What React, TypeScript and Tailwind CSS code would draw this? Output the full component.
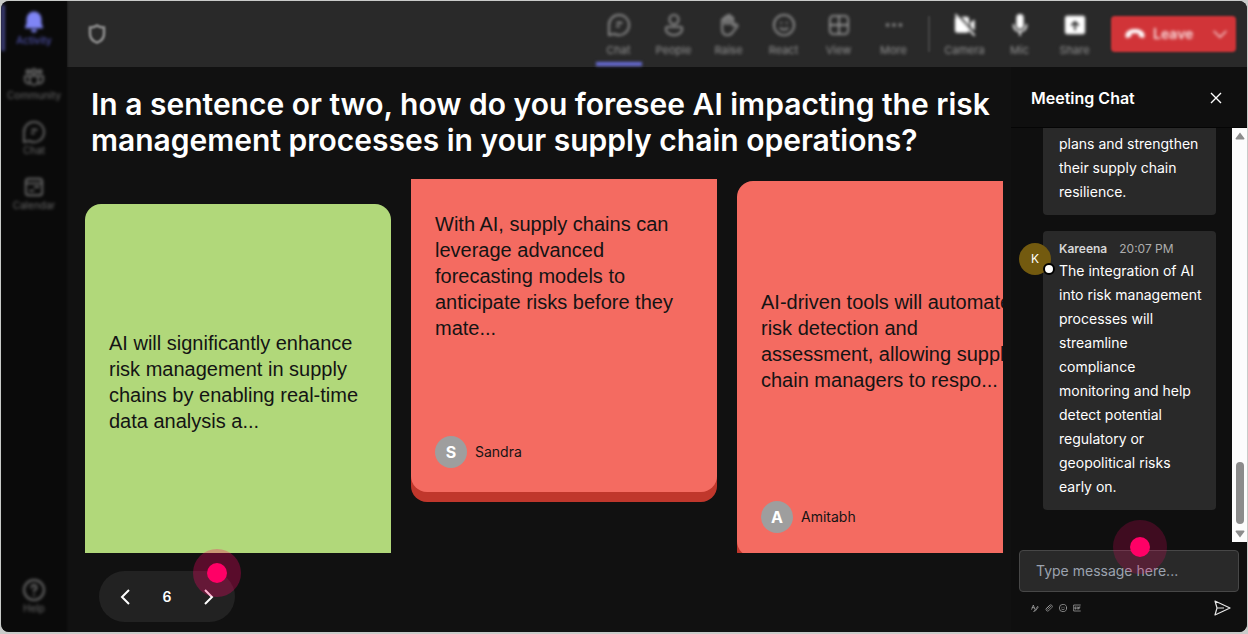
import React, { useState } from 'react';

interface IconProps {
  className?: string;
}

interface NavItem {
  label: string;
  icon: React.FC<IconProps>;
  active?: boolean;
}

interface Answer {
  text: string;
  author?: string;
  initial?: string;
  cardClass: string;
  bodyClass: string;
}

// Shared wrapper for the 24px outline icons
const Icon: React.FC<IconProps & { children: React.ReactNode }> = ({ className = 'size-6', children }) => (
  <svg
    viewBox="0 0 24 24"
    className={className}
    fill="none"
    stroke="currentColor"
    strokeWidth="2"
    strokeLinecap="round"
    strokeLinejoin="round"
    aria-hidden="true"
  >
    {children}
  </svg>
);

const BellIcon: React.FC<IconProps> = ({ className }) => (
  <Icon className={className}>
    <path
      d="M12 1.5A7.5 7.5 0 0 0 4.5 9v4.5L3 17.2c-.2.6.2 1.1.8 1.1h16.4c.6 0 1-.5.8-1.1l-1.5-3.7V9A7.5 7.5 0 0 0 12 1.5zM9 19.5a3 3 0 0 0 6 0z"
      fill="currentColor"
      stroke="none"
    />
  </Icon>
);

const CommunityIcon: React.FC<IconProps> = ({ className }) => (
  <Icon className={className}>
    <circle cx="12" cy="6" r="2.5" />
    <circle cx="5.5" cy="6" r="1.8" />
    <circle cx="18.5" cy="6" r="1.8" />
    <path d="M7.5 11h9v5a4.5 4.5 0 0 1-9 0zM7.5 11H2v4a4.5 4.5 0 0 0 5.5 4M16.5 11H22v4a4.5 4.5 0 0 1-5.5 4" />
  </Icon>
);

const ChatIcon: React.FC<IconProps> = ({ className }) => (
  <Icon className={className}>
    <path d="M12 1a11 11 0 1 1-5.200 20.700L1 23V12A11 11 0 0 1 12 1z" />
    <path d="M10 9.5h5M9.5 13.5H12" />
  </Icon>
);

const CalendarIcon: React.FC<IconProps> = ({ className }) => (
  <Icon className={className}>
    <rect x="3" y="3" width="18" height="18" rx="3" />
    <path d="M3 8h18M7.5 16h4M13 12h4" />
  </Icon>
);

const HelpIcon: React.FC<IconProps> = ({ className }) => (
  <Icon className={className}>
    <circle cx="12" cy="12" r="10" />
    <path d="M9.5 9.5a2.5 2.5 0 1 1 3.6 2.2c-.8.4-1.1.9-1.1 1.8M12 17v.2" />
  </Icon>
);

const PeopleIcon: React.FC<IconProps> = ({ className }) => (
  <Icon className={className}>
    <circle cx="12" cy="6" r="5" />
    <path d="M5 14h14c1.2 0 2 .8 2 1.8 0 4.2-3.8 7.200-9 7.200s-9-3-9-7.200c0-1 .8-1.800 2-1.800z" />
  </Icon>
);

const RaiseIcon: React.FC<IconProps> = ({ className }) => (
  <Icon className={className}>
    <path d="M4.5 12V6.500a1.500 1.500 0 0 1 3 0V4a1.500 1.500 0 0 1 3 0V2.500a1.500 1.500 0 0 1 3 0V5a1.500 1.500 0 0 1 3 0v8l2-1.500c1.500-1 3.500.5 2.500 2l-4 5C15 21.500 14 23 10.500 23c-4 0-6-2.500-6-6.500z" />
    <path d="M7.5 6.500V11M10.500 4v7M13.500 5v6" />
  </Icon>
);

const ReactIcon: React.FC<IconProps> = ({ className }) => (
  <Icon className={className}>
    <circle cx="12" cy="12" r="11" />
    <path d="M8 15.5c2 2 6 2 8 0M9 9.5v.4M15 9.5v.4" />
  </Icon>
);

const ViewIcon: React.FC<IconProps> = ({ className }) => (
  <Icon className={className}>
    <rect x="2" y="2" width="20" height="20" rx="4" />
    <path d="M12 2v20M2 12h20" />
  </Icon>
);

const MoreIcon: React.FC<IconProps> = ({ className }) => (
  <Icon className={className}>
    <g fill="currentColor" stroke="none">
      <circle cx="5" cy="12" r="2" />
      <circle cx="12" cy="12" r="2" />
      <circle cx="19" cy="12" r="2" />
    </g>
  </Icon>
);

const CameraOffIcon: React.FC<IconProps> = ({ className }) => (
  <Icon className={className}>
    <path
      d="M1 5.5A2.500 2.500 0 0 1 3 3l13 14v2.500c-.5.400-1 1-1.500 1h-11A2.500 2.500 0 0 1 1 18zM8 3h6a2.500 2.500 0 0 1 2.500 2.500V13zM18 9.500l3.500-3c.5-.400 1 0 1 .5v10c0 .6-.5.8-1 .5L18 14z"
      fill="currentColor"
      stroke="none"
    />
    <path d="M2 1l20 22" />
  </Icon>
);

const MicIcon: React.FC<IconProps> = ({ className }) => (
  <Icon className={className}>
    <rect x="8" y="0" width="8" height="16" rx="4" fill="currentColor" stroke="none" />
    <path d="M5 12a7 7 0 0 0 14 0M12 19v4" />
  </Icon>
);

const ShareIcon: React.FC<IconProps> = ({ className }) => (
  <Icon className={className}>
    <rect x="1" y="2" width="22" height="20" rx="2.5" fill="currentColor" stroke="none" />
    <path d="M12 17V8.5M8.5 12L12 8.5l3.5 3.5" stroke="#292929" />
  </Icon>
);

const navItems: NavItem[] = [
  { label: 'Activity', icon: BellIcon, active: true },
  { label: 'Community', icon: CommunityIcon },
  { label: 'Chat', icon: ChatIcon },
  { label: 'Calendar', icon: CalendarIcon },
];

const meetingActions: NavItem[] = [
  { label: 'Chat', icon: ChatIcon, active: true },
  { label: 'People', icon: PeopleIcon },
  { label: 'Raise', icon: RaiseIcon },
  { label: 'React', icon: ReactIcon },
  { label: 'View', icon: ViewIcon },
  { label: 'More', icon: MoreIcon },
];

const deviceActions: NavItem[] = [
  { label: 'Camera', icon: CameraOffIcon },
  { label: 'Mic', icon: MicIcon },
  { label: 'Share', icon: ShareIcon },
];

const answers: Answer[] = [
  {
    text: 'AI will significantly enhance risk management in supply chains by enabling real-time data analysis a...',
    cardClass: 'mt-[25px] h-[355px] rounded-t-2xl bg-[#b1d87a]',
    bodyClass: 'my-auto',
  },
  {
    text: 'With AI, supply chains can leverage advanced forecasting models to anticipate risks before they mate...',
    author: 'Sandra',
    initial: 'S',
    cardClass: 'h-[313px] rounded-b-2xl bg-[#f46b61] shadow-[0_10px_0_#c0372c]',
    bodyClass: 'mt-2 mb-auto',
  },
  {
    text: 'AI-driven tools will automate risk detection and assessment, allowing supply chain managers to respo...',
    author: 'Amitabh',
    initial: 'A',
    cardClass: 'mt-0.5 h-[376px] rounded-2xl bg-[#f46b61] shadow-[0_10px_0_#c0372c]',
    bodyClass: 'my-auto pb-6',
  },
];

const Sidebar: React.FC = () => (
  <nav className="flex w-[66px] shrink-0 flex-col bg-[#0a0a0a] pb-[18px] text-[10px] text-[#6b6b6b] blur-[1px]">
    {navItems.map(({ label, icon: ItemIcon, active }) => (
      <button
        key={label}
        type="button"
        className={`relative flex h-[55px] flex-col items-center pt-[9px] leading-3 blur-[1px] ${active ? 'text-[#5b5fc7]' : ''}`}
      >
        {active && <span className="absolute top-1 left-0 h-[46px] w-1 bg-[#3d3e78]" />}
        <ItemIcon className={active ? 'size-6 text-[#7f85f5]' : 'size-6 px-px'} />
        {label}
      </button>
    ))}
    <button type="button" className="mt-auto flex flex-col items-center leading-3 blur-[1px]">
      <HelpIcon className="size-6" />
      Help
    </button>
  </nav>
);

const ActionButton: React.FC<{ item: NavItem; bright?: boolean }> = ({ item, bright }) => {
  const ItemIcon = item.icon;
  return (
    <button
      type="button"
      className="relative flex w-[55px] flex-col items-center pt-1 text-[11px] leading-4 text-[#939393] blur-[1px]"
    >
      <ItemIcon className={bright ? 'mb-1.5 size-[22px] text-white' : 'mb-1.5 size-[22px]'} />
      {item.label}
      {item.active && <span className="absolute -bottom-2 h-1 w-[46px] bg-[#6a6edb]" />}
    </button>
  );
};

const TopBar: React.FC = () => (
  <header className="flex h-[66px] items-center bg-[#292929] pr-[11px] pl-5">
    <div className="flex flex-1 items-center">
      <svg
        viewBox="0 0 20 22"
        className="h-[22px] w-5 text-[#939393] blur-[1px]"
        fill="none"
        stroke="currentColor"
        strokeWidth="2.5"
        aria-hidden="true"
      >
        <path d="M10 2.5c2 1.5 4.5 2 7 2V11c0 4.5-3 7.2-7 8.7C6 18.2 3 15.5 3 11V4.5c2.5 0 5-.5 7-2z" />
      </svg>
      <div className="ml-auto flex items-center blur-[1px]">
        {meetingActions.map((item) => (
          <ActionButton key={item.label} item={item} />
        ))}
        <span className="mx-[7px] h-9 w-0.5 bg-[#454545]" />
        {deviceActions.map((item) => (
          <ActionButton key={item.label} item={item} bright />
        ))}
      </div>
      <div className="ml-[9px] flex h-9 w-[125px] rounded bg-[#d13438] text-[#f9dfe0] blur-[1px]">
        <button type="button" className="flex flex-1 items-center gap-2 pl-[14px] text-sm font-semibold blur-[1px]">
          <svg viewBox="0 0 20 12" className="h-3 w-5 text-white" fill="currentColor" aria-hidden="true">
            <path d="M10 1C5.5 1 1 3 .5 6.500c-.2 1.500.1 2.700.7 3.200.5.4 1 .3 1.600.1l2.500-.8c.7-.2 1-.7 1-1.400V5.800c2.300-.8 5.100-.8 7.400 0v1.800c0 .7.3 1.200 1 1.400l2.500.8c.6.2 1.100.3 1.600-.1.6-.5.9-1.700.7-3.200C19 3 14.500 1 10 1z" />
          </svg>
          Leave
        </button>
        <button type="button" aria-label="Leave options" className="flex w-8 items-center justify-center blur-[1px]">
          <Icon className="size-4">
            <path d="M3 8l9 9 9-9" />
          </Icon>
        </button>
      </div>
    </div>
  </header>
);

const AnswerCard: React.FC<{ answer: Answer }> = ({ answer }) => (
  <article className={`flex w-[306px] shrink-0 flex-col p-6 text-[#141414] ${answer.cardClass}`}>
    <p className={`font-['Liberation_Sans',Arial,sans-serif] text-xl leading-[26px] ${answer.bodyClass}`}>{answer.text}</p>
    {answer.author && (
      <footer className="flex items-center gap-2 text-sm">
        <span className="flex size-8 items-center justify-center rounded-full bg-[#9e9e9e] text-base font-bold text-white">
          {answer.initial}
        </span>
        {answer.author}
      </footer>
    )}
  </article>
);

// Pink marker that sits over a clickable spot
const Hotspot: React.FC<{ className: string }> = ({ className }) => (
  <span className={`pointer-events-none absolute flex items-center justify-center rounded-full ${className}`}>
    <span className="size-5 rounded-full bg-[#ff0066]" />
  </span>
);

const Slide: React.FC = () => {
  const [page, setPage] = useState<number>(6);

  return (
    <main className="flex min-w-0 flex-1 flex-col pt-[19px] pb-[9px]">
      <h1 className="pr-4 pl-6 text-3xl leading-9 font-semibold text-white">
        In a sentence or two, how do you foresee AI impacting the risk management processes in your supply chain operations?
      </h1>

      <div className="mt-[21px] mr-2 ml-[18px] flex h-[374px] items-start gap-5 overflow-hidden">
        {answers.map((answer) => (
          <AnswerCard key={answer.text} answer={answer} />
        ))}
      </div>

      <div className="relative mt-[18px] ml-8 flex h-[51px] w-[136px] items-center justify-between rounded-full bg-[#222222] px-4 text-white">
        <button type="button" aria-label="Previous" onClick={() => setPage(page - 1)} className="flex size-5 items-center justify-center">
          <svg viewBox="0 0 10 16" className="h-4 w-[10px]" fill="none" stroke="currentColor" strokeWidth="2" aria-hidden="true">
            <path d="M9 1L2 8l7 7" />
          </svg>
        </button>
        <span className="text-sm font-semibold">{page}</span>
        <button type="button" aria-label="Next" onClick={() => setPage(page + 1)} className="flex size-5 items-center justify-center">
          <svg viewBox="0 0 10 16" className="h-4 w-[10px]" fill="none" stroke="currentColor" strokeWidth="2" aria-hidden="true">
            <path d="M1 1l7 7-7 7" />
          </svg>
        </button>
        <Hotspot className="-top-[22px] -right-[6px] size-12 bg-[#ff0066]/30" />
      </div>
    </main>
  );
};

const ChatPanel: React.FC = () => {
  const [message, setMessage] = useState<string>('');

  return (
    <aside className="flex w-[236px] shrink-0 flex-col bg-[#0f0f0f] text-white">
      <div className="flex h-[61px] items-center justify-between border-b border-[#050505] pt-0.5 pr-[25px] pl-5">
        <h2 className="text-base font-semibold">Meeting Chat</h2>
        <button type="button" aria-label="Close chat">
          <svg viewBox="0 0 12 12" className="size-3" fill="none" stroke="currentColor" strokeWidth="1.4" aria-hidden="true">
            <path d="M1 1l10 10M11 1L1 11" />
          </svg>
        </button>
      </div>

      <div className="flex h-[414px]">
        <div className="flex flex-1 flex-col gap-4 pr-4 pl-2 text-sm leading-6">
          <div className="ml-6 rounded-b bg-[#292929] pt-1 pr-3 pb-[11px] pl-4">plans and strengthen their supply chain resilience.</div>
          <div className="flex items-start">
            <span className="relative mt-3 -mr-2 flex size-8 shrink-0 items-center justify-center rounded-full bg-[#735a0f] text-xs">
              K
              <span className="absolute -right-1 bottom-0 size-3 rounded-full border-2 border-black bg-white" />
            </span>
            <div className="flex-1 rounded bg-[#292929] pt-2 pr-3 pb-[11px] pl-4">
              <div className="flex gap-3 text-xs leading-5">
                <span className="font-semibold text-[#d6d6d6]">Kareena</span>
                <span className="text-[#adadad]">20:07 PM</span>
              </div>
              <p>The integration of AI into risk management processes will streamline compliance monitoring and help detect potential regulatory or geopolitical risks early on.</p>
            </div>
          </div>
        </div>

        {/* Scroll bar */}
        <div className="flex w-[15px] flex-col items-center bg-[#fcfcfc] py-1 text-[#8b8b8b]">
          <svg viewBox="0 0 10 8" className="h-2 w-[10px]" fill="currentColor" aria-hidden="true">
            <path d="M5 .5l4.5 6q0 1-1 1h-7q-1 0-1-1z" />
          </svg>
          <span className="mt-auto h-[62px] w-2 rounded-full bg-[#8b8b8b]" />
          <svg viewBox="0 0 10 8" className="mt-1.5 h-2 w-[10px]" fill="currentColor" aria-hidden="true">
            <path d="M5 7.5l4.5-6q0-1-1-1h-7q-1 0-1 1z" />
          </svg>
        </div>
      </div>

      <div className="relative mx-2 mt-2">
        <input
          type="text"
          aria-label="Type message"
          placeholder="Type message here..."
          value={message}
          onChange={(e) => setMessage(e.target.value)}
          className="h-[42px] w-full rounded border border-[#474747] bg-[#292929] px-4 pb-0.5 text-sm text-white placeholder:text-[#9ca3af]"
        />
        <Hotspot className="-top-[30px] left-[94px] size-[54px] bg-[#ff0066]/20" />
      </div>

      <div className="mt-2 flex items-center justify-between pr-4 pl-5 text-[#b5b5b5]">
        <div className="flex gap-[6px]">
          <button type="button" aria-label="Format">
            <Icon className="size-2">
              <path d="M2 16L7 3l4 12M3.5 11h6M12 18l8-11 2 2-8 11-5 2z" />
            </Icon>
          </button>
          <button type="button" aria-label="Attach">
            <Icon className="size-2">
              <path d="M5 13l9-9a4.5 4.5 0 0 1 6.5 6.5l-10 10A5 5 0 0 1 3.5 14L13 5M8 16l9-9" />
            </Icon>
          </button>
          <button type="button" aria-label="Emoji">
            <ReactIcon className="size-2" />
          </button>
          <button type="button" aria-label="GIF">
            <Icon className="size-2">
              <path d="M22 3H2v18h20M9 9H6v6h3v-3M13 9v6M17 15V9h4M17 12h3" />
            </Icon>
          </button>
        </div>
        <button type="button" aria-label="Send" className="text-[#e6e6e6]">
          <svg viewBox="0 0 17 16" className="h-4 w-[17px]" fill="none" stroke="currentColor" strokeWidth="1.2" strokeLinejoin="round" aria-hidden="true">
            <path d="M1 1l15 7-15 7 2-7zM3 8h7" />
          </svg>
        </button>
      </div>
    </aside>
  );
};

const App: React.FC = () => (
  <div className="flex min-h-screen bg-[#c9cbc9] px-px pt-px pb-0.5 font-['Inter',sans-serif]">
    <div className="flex flex-1 overflow-hidden rounded-lg bg-[#111111]">
      <Sidebar />
      <div className="flex min-w-0 flex-1 flex-col">
        <TopBar />
        <div className="flex flex-1">
          <Slide />
          <ChatPanel />
        </div>
      </div>
    </div>
  </div>
);

export default App;
